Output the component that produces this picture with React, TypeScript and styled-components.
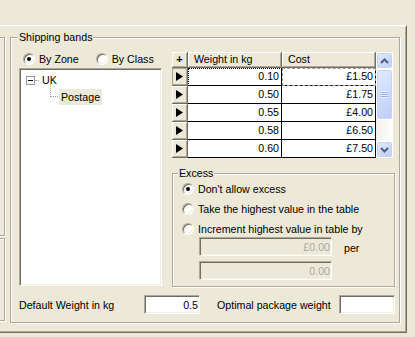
import React from "react"
import styled, { createGlobalStyle } from "styled-components"

const GlobalStyle = createGlobalStyle`
html, body {
  margin: 0;
  padding: 0;
  background: #ece9d8;
}
body {
  font-family: "Liberation Sans", Arial, sans-serif;
  font-size: 8pt;
  color: #000;
}
`

const rows = [
    { weight: "0.10", cost: "£1.50" },
    { weight: "0.50", cost: "£1.75" },
    { weight: "0.55", cost: "£4.00" },
    { weight: "0.58", cost: "£6.50" },
    { weight: "0.60", cost: "£7.50" },
]

const Radio = ({ label, checked }: { label: string; checked?: boolean }) => {
    return (
        <RadioOption>
            <RadioDot $checked={checked} />
            <span>{label}</span>
        </RadioOption>
    )
}

const Chevron = ({ down }: { down?: boolean }) => {
    return (
        <svg width="9" height="6" viewBox="0 0 9 6">
            <polyline
                points={down ? "1,1 4.5,4.5 8,1" : "1,5 4.5,1.5 8,5"}
                fill="none"
                stroke="#4d6185"
                strokeWidth="2"
            />
        </svg>
    )
}

const Pointer = () => {
    return (
        <svg width="7" height="9" viewBox="0 0 7 9">
            <polygon points="0,0 7,4.5 0,9" fill="#000" />
        </svg>
    )
}

const App = () => {
    return (
        <Screen>
            <GlobalStyle />
            <TabPage>
                <SideStack>
                    <SideGroup $height={199} />
                    <SideGroup $height={83} />
                </SideStack>
                <ShippingBox>
                    <Legend $shift={-1}>Shipping bands</Legend>
                    <TopSection>
                        <LeftColumn>
                            <RadioRow>
                                <Radio label="By Zone" checked />
                                <Radio label="By Class" />
                            </RadioRow>
                            <Tree>
                                <TreeRow>
                                    <Expander>
                                        <Minus />
                                    </Expander>
                                    <TreeDash />
                                    <TreeLabel>UK</TreeLabel>
                                </TreeRow>
                                <TreeRow>
                                    <Branch />
                                    <TreeLabel $selected>Postage</TreeLabel>
                                </TreeRow>
                            </Tree>
                        </LeftColumn>
                        <RightColumn>
                            <DataGrid>
                                <Corner>+</Corner>
                                <HeaderCell>Weight in kg</HeaderCell>
                                <HeaderCell>Cost</HeaderCell>
                                <ScrollBar>
                                    <ScrollButton>
                                        <Chevron />
                                    </ScrollButton>
                                    <Thumb>
                                        <Grip />
                                    </Thumb>
                                    <Track />
                                    <ScrollButton>
                                        <Chevron down />
                                    </ScrollButton>
                                </ScrollBar>
                                {rows.map((r, i) => (
                                    <React.Fragment key={r.weight}>
                                        <RowMarker $current={i === 0}>
                                            <Pointer />
                                        </RowMarker>
                                        <Cell $focus={i === 0 ? "dotted" : undefined}>{r.weight}</Cell>
                                        <Cell $focus={i === 0 ? "dashed" : undefined}>{r.cost}</Cell>
                                    </React.Fragment>
                                ))}
                            </DataGrid>
                            <ExcessBox>
                                <Legend $shift={-4}>Excess</Legend>
                                <ExcessBody>
                                    <Radio label="Don't allow excess" checked />
                                    <Radio label="Take the highest value in the table" />
                                    <Radio label="Increment highest value in table by" />
                                    <IncrementFields>
                                        <FieldRow>
                                            <Field $width={133} $disabled readOnly value="£0.00" />
                                            <PerLabel>per</PerLabel>
                                        </FieldRow>
                                        <Field $width={133} $disabled readOnly value="0.00" />
                                    </IncrementFields>
                                </ExcessBody>
                            </ExcessBox>
                        </RightColumn>
                    </TopSection>
                    <BottomRow>
                        <FieldLabel $width={125}>Default Weight in kg</FieldLabel>
                        <Field $width={56} readOnly value="0.5" />
                        <FieldLabel $width={122} $gap={17}>Optimal package weight</FieldLabel>
                        <Field $width={56} readOnly value="" />
                    </BottomRow>
                </ShippingBox>
            </TabPage>
        </Screen>
    )
}

export default App

const Screen = styled.div`
width: 415px;
height: 337px;
overflow: hidden;
padding-top: 25px;
box-sizing: border-box;
`
const TabPage = styled.div`
box-sizing: border-box;
margin-left: -100px;
width: 507px;
height: 308px;
display: flex;
align-items: flex-start;
padding-top: 5px;
border: 1px solid;
border-color: #fff #716f64 #716f64 #fff;
box-shadow: inset 1px 1px 0 #f1efe2, inset -1px -1px 0 #aca899;
`
const SideStack = styled.div`
flex: none;
width: 104px;
padding-top: 6px;
display: flex;
flex-direction: column;
gap: 2px;
`
const SideGroup = styled.div<{ $height: number }>`
box-sizing: border-box;
height: ${p => p.$height}px;
border: 1px solid #aca899;
box-shadow: inset 1px 1px 0 #fff, 1px 1px 0 #fff;
`
const GroupBox = styled.fieldset`
margin: 0;
min-width: 0;
box-sizing: border-box;
border: 1px solid #aca899;
box-shadow: inset 1px 1px 0 #fff, 1px 1px 0 #fff;
`
const ShippingBox = styled(GroupBox)`
flex: none;
width: 390px;
margin-left: 5px;
padding: 8px 4px 8px 8px;
`
const Legend = styled.legend<{ $shift: number }>`
margin-left: ${p => p.$shift}px;
padding: 0 1px;
line-height: 13px;
background: #ece9d8;
`
const TopSection = styled.div`
display: grid;
grid-template-columns: 143px 223px;
column-gap: 10px;
align-items: start;
`
const LeftColumn = styled.div`
display: flex;
flex-direction: column;
`
const RadioRow = styled.div`
height: 13px;
margin-left: 4px;
display: flex;
align-items: center;
gap: 17px;
`
const RadioOption = styled.div`
height: 16px;
display: flex;
align-items: center;
gap: 4px;
white-space: nowrap;
`
const RadioDot = styled.span<{ $checked?: boolean }>`
flex: none;
box-sizing: border-box;
width: 12px;
height: 12px;
border-radius: 50%;
border: 1px solid;
border-color: #aca899 #fff #fff #aca899;
box-shadow: inset 1px 1px 0 #716f64, inset -1px -1px 0 #f1efe2;
background: #fff;
display: grid;
place-items: center;
&::after {
  content: "";
  width: 4px;
  height: 4px;
  border-radius: 50%;
  background: ${p => (p.$checked ? "#000" : "transparent")};
}
`
const Sunken = styled.div`
box-sizing: border-box;
border: 1px solid;
border-color: #aca899 #fff #fff #aca899;
box-shadow: inset 1px 1px 0 #716f64, inset -1px -1px 0 #f1efe2;
`
const Tree = styled(Sunken)`
margin-top: 3px;
height: 218px;
background: #fff;
padding: 3px 0 0 3px;
display: flex;
flex-direction: column;
gap: 1px;
`
const TreeRow = styled.div`
height: 16px;
display: flex;
align-items: center;
`
const Expander = styled.span`
flex: none;
box-sizing: border-box;
width: 9px;
height: 9px;
margin-left: 3px;
border: 1px solid #919b9c;
background: #fff;
display: grid;
place-items: center;
`
const Minus = styled.span`
width: 5px;
height: 1px;
background: #000;
`
const TreeDash = styled.span`
width: 4px;
border-top: 1px dotted #a0a0a0;
`
const Branch = styled.span`
flex: none;
align-self: flex-start;
box-sizing: border-box;
width: 8px;
height: 13px;
margin: -5px 0 0 27px;
border-left: 1px dotted #a0a0a0;
border-bottom: 1px dotted #a0a0a0;
`
const TreeLabel = styled.span<{ $selected?: boolean }>`
margin-left: 1px;
padding: 0 2px;
line-height: 16px;
background: ${p => (p.$selected ? "#ece9d8" : "transparent")};
`
const RightColumn = styled.div`
display: flex;
flex-direction: column;
`
const DataGrid = styled.div`
display: grid;
grid-template-columns: 16px 94px 94px 17px;
grid-template-rows: 16px repeat(5, 18px);
`
const Raised = styled.div`
box-sizing: border-box;
background: #ece9d8;
border-right: 1px solid #716f64;
border-bottom: 1px solid #716f64;
box-shadow: inset 1px 1px 0 #fff, inset -1px -1px 0 #aca899;
`
const Corner = styled(Raised)`
display: grid;
place-items: center;
font-weight: bold;
font-size: 11px;
line-height: 1;
`
const HeaderCell = styled(Raised)`
padding-left: 6px;
line-height: 15px;
white-space: nowrap;
`
const RowMarker = styled(Raised)<{ $current?: boolean }>`
display: flex;
align-items: center;
padding-left: 4px;
${p => p.$current && "box-shadow: inset 1px 1px 0 #aca899, inset -1px -1px 0 #aca899;"}
`
const Cell = styled.div<{ $focus?: "dotted" | "dashed" }>`
box-sizing: border-box;
background: #fff;
border-right: 1px solid #000;
border-bottom: 1px solid #000;
padding-right: 2px;
text-align: right;
line-height: 17px;
outline: ${p => (p.$focus === "dotted" ? "1px dotted #000" : p.$focus === "dashed" ? "1px dashed #999" : "none")};
outline-offset: -1px;
`
const ScrollBar = styled.div`
grid-column: 4;
grid-row: 1 / -1;
display: flex;
flex-direction: column;
background: linear-gradient(to right, #f3f1ec, #fefefb);
`
const BlueButton = styled.div`
box-sizing: border-box;
border: 1px solid #fff;
border-radius: 3px;
background: linear-gradient(135deg, #e3ebfd, #bcccf8);
box-shadow: inset 0 0 0 1px #c4d3f8;
display: grid;
place-items: center;
`
const ScrollButton = styled(BlueButton)`
height: 17px;
`
const Thumb = styled(BlueButton)`
height: 51px;
`
const Grip = styled.span`
width: 7px;
height: 7px;
background: repeating-linear-gradient(to bottom, #eef4fe 0 1px, #8cb0f8 1px 2px);
`
const Track = styled.div`
flex: 1;
`
const ExcessBox = styled(GroupBox)`
margin-top: 9px;
padding: 1px 4px 6px 9px;
`
const ExcessBody = styled.div`
display: flex;
flex-direction: column;
gap: 4px;
`
const IncrementFields = styled.div`
margin: -4px 0 0 17px;
display: flex;
flex-direction: column;
gap: 3px;
`
const FieldRow = styled.div`
display: flex;
align-items: flex-start;
`
const PerLabel = styled.span`
margin-left: 12px;
line-height: 19px;
padding-top: 2px;
`
const Field = styled.input<{ $width: number; $disabled?: boolean }>`
box-sizing: border-box;
width: ${p => p.$width}px;
height: 19px;
margin: 0;
padding: 0 1px;
font: inherit;
text-align: right;
color: ${p => (p.$disabled ? "#aca899" : "#000")};
background: ${p => (p.$disabled ? "#ece9d8" : "#fff")};
border: 1px solid;
border-color: #aca899 #fff #fff #aca899;
box-shadow: inset 1px 1px 0 #716f64, inset -1px -1px 0 #f1efe2;
outline: none;
`
const BottomRow = styled.div`
margin-top: 8px;
display: flex;
align-items: center;
`
const FieldLabel = styled.span<{ $width: number; $gap?: number }>`
flex: none;
width: ${p => p.$width}px;
margin-left: ${p => p.$gap ?? 0}px;
white-space: nowrap;
`
